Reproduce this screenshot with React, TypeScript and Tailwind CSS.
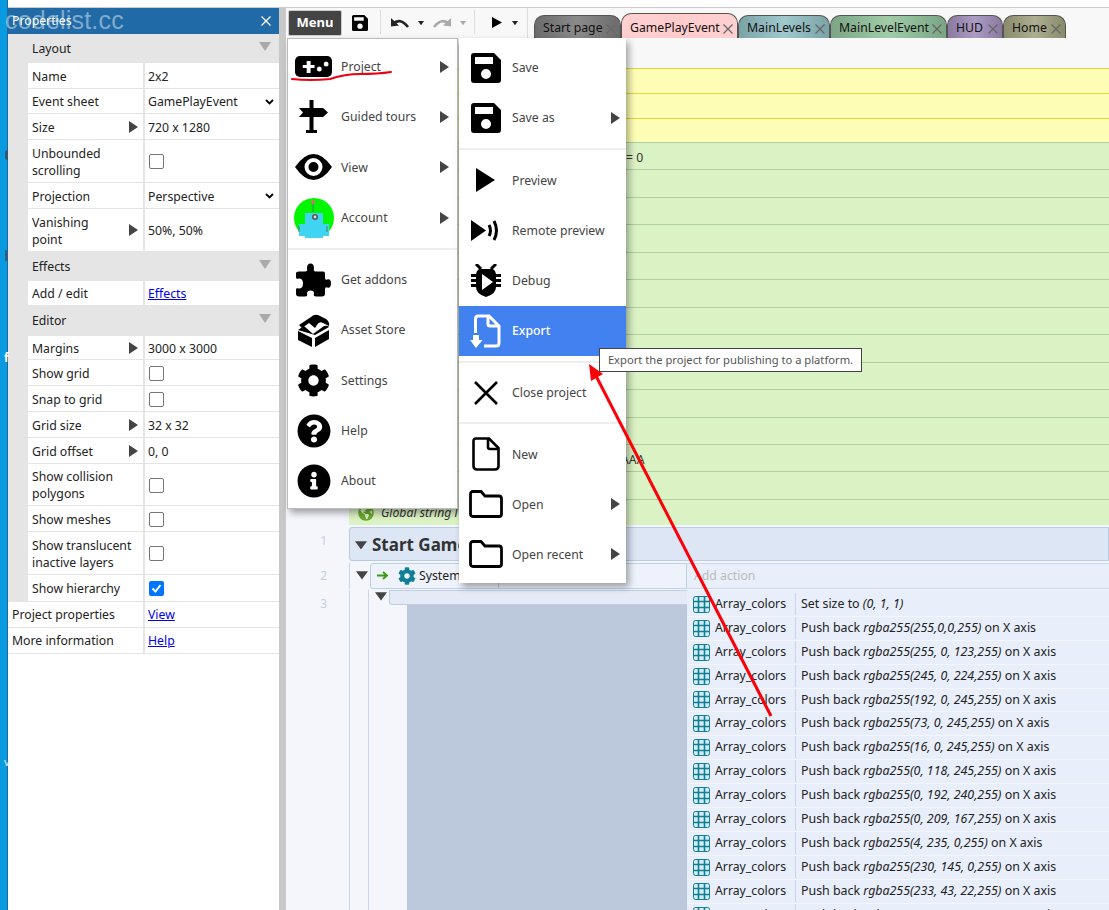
import type { ReactNode } from "react";
import { FaCog, FaGlobeAmericas, FaInfoCircle, FaQuestionCircle } from "react-icons/fa";

function Tri({ className = "" }: { className?: string }) {
  return (
    <svg width="9" height="12" viewBox="0 0 9 12" className={className}>
      <path d="M0 0L9 6L0 12Z" fill="#444" />
    </svg>
  );
}

function Down({ size = 13, color = "#444" }: { size?: number; color?: string }) {
  return (
    <svg width={size} height={size * 0.72} viewBox="0 0 13 9" className="shrink-0">
      <path d="M0 0H13L6.5 9Z" fill={color} />
    </svg>
  );
}

function SaveIcon({ size = 30 }: { size?: number }) {
  return (
    <svg width={size} height={size} viewBox="0 0 30 30">
      <path
        fillRule="evenodd"
        d="M3 0H23L30 7V27Q30 30 27 30H3Q0 30 0 27V3Q0 0 3 0ZM4 4V11H22V4ZM15 16A5 5 0 1 0 15.01 26A5 5 0 1 0 15 16Z"
        fill="#000"
      />
    </svg>
  );
}

function Gamepad() {
  return (
    <svg width="37" height="21" viewBox="0 0 38 21" preserveAspectRatio="none">
      <rect width="38" height="21" rx="5" fill="#000" />
      <path d="M8 9H12V5H16V9H20V12H16V17H12V12H8Z" fill="#fff" />
      <circle cx="25" cy="13" r="2.5" fill="#fff" />
      <circle cx="32" cy="8" r="2.5" fill="#fff" />
    </svg>
  );
}

function Signpost() {
  return (
    <svg width="29" height="33" viewBox="0 0 29 33">
      <path d="M10.500 0H14.500V8H24L29 12.500L24 17H14.500V30H18V33H7V30H10.500V17H0L4 12.500L0 8H10.500Z" fill="#000" />
    </svg>
  );
}

function Eye() {
  return (
    <svg width="37" height="26" viewBox="0 0 37 26">
      <path
        fillRule="evenodd"
        d="M0 13Q9 0 18.5 0Q28 0 37 13Q28 26 18.5 26Q9 26 0 13ZM18.5 4A9 9 0 1 0 18.51 22A9 9 0 1 0 18.5 4ZM18.5 8A5 5 0 1 1 18.49 18A5 5 0 1 1 18.5 8Z"
        fill="#000"
      />
    </svg>
  );
}

function Avatar() {
  return (
    <svg width="40" height="40" viewBox="0 0 40 40">
      <circle cx="20" cy="20" r="20" fill="#00f700" />
      <circle cx="19" cy="4" r="2" fill="#e06a80" />
      <path d="M19 6V14" stroke="#3a8a50" strokeWidth="1" />
      <rect x="11" y="15" width="18" height="25" fill="#3fd4f2" />
      <rect x="5" y="26" width="30" height="12" fill="#3fd4f2" />
      <circle cx="21" cy="19" r="3" fill="#555" />
      <circle cx="21" cy="19" r="1.4" fill="#ddd" />
      <path d="M5 28V34M33 28V34" stroke="#3a8a50" strokeWidth="1" />
    </svg>
  );
}

function Puzzle() {
  return (
    <svg width="35" height="34" viewBox="0 0 35 33">
      <path
        d="M3 8H9Q12 8 11 5Q11 0 14.500 0Q18 0 18 5Q17 8 20 8H27Q29 8 29 10V14Q29 17 31 16Q35 15 35 20Q35 25 31 24Q29 23 29 26V30Q29 33 26 33H20Q17 33 18 30Q18 27 14.500 27Q11 27 11 30Q12 33 9 33H3Q0 33 0 30V26Q0 24 3 25Q7 25 7 20Q7 15 3 15Q0 16 0 14V10Q0 8 3 8Z"
        fill="#000"
      />
    </svg>
  );
}

function Chest() {
  return (
    <svg width="32" height="33" viewBox="0 0 32 33">
      <path d="M1 11L13 3Q16 0 20 1L28 5Q32 8 31 12L25 9Q21 7 19 11L17 14L11 9L4 14Z" fill="#000" />
      <path d="M0 16L6 12L15 20L26 12Q30 11 31 13L17 21Z" fill="#000" />
      <path d="M0 17L14 24V33L0 26Z" fill="#000" />
      <path d="M17 24L31 16V25L17 33Z" fill="#000" />
    </svg>
  );
}

function PlayIcon() {
  return (
    <svg width="19" height="24" viewBox="0 0 19 24">
      <path d="M0 0L19 12L0 24Z" fill="#000" />
    </svg>
  );
}

function Remote() {
  return (
    <svg width="29" height="25" viewBox="0 0 29 25">
      <path d="M0 2L15 12.5L0 23Z" fill="#000" />
      <path d="M18 7Q21 12.5 18 18M23 3Q28 12.5 23 22" stroke="#000" strokeWidth="3" fill="none" />
    </svg>
  );
}

function Bug() {
  return (
    <svg width="30" height="33" viewBox="0 0 30 33">
      <path d="M5 0L10 5M25 0L20 5" stroke="#000" strokeWidth="3" />
      <path
        fillRule="evenodd"
        d="M8 5H22Q25 7 25 10H30V13H25V15H30V18H25V20H30V23H25Q25 30 15 33Q5 30 5 23H0V20H5V18H0V15H5V13H0V10H5Q5 7 8 5ZM11 10V26L22 18Z"
        fill="#000"
      />
    </svg>
  );
}

function ExportIcon() {
  return (
    <svg width="31" height="34" viewBox="0 0 31 34" fill="none">
      <path d="M5.500 19V5Q5.500 2 8 2H19L29 12V29Q29 32 26 32H14" stroke="#fff" strokeWidth="3" />
      <path d="M18 2V10Q18 12 20 12H29" stroke="#fff" strokeWidth="3" />
      <path d="M3 21H9V26H12.500L6 34L0 26H3Z" fill="#fff" />
    </svg>
  );
}

function Cross() {
  return (
    <svg width="24" height="24" viewBox="0 0 24 24">
      <path d="M1 1L23 23M23 1L1 23" stroke="#000" strokeWidth="2.6" />
    </svg>
  );
}

function NewFile() {
  return (
    <svg width="28" height="34" viewBox="0 0 28 34" fill="none">
      <path d="M4 1.500H17L26.500 11V29Q26.500 32.500 23 32.500H5Q1.500 32.500 1.500 29V4Q1.500 1.500 4 1.500Z" stroke="#000" strokeWidth="2.6" />
      <path d="M16 1.500V10Q16 12 18 12H26.500" stroke="#000" strokeWidth="2.6" />
    </svg>
  );
}

function Folder() {
  return (
    <svg width="34" height="28" viewBox="0 0 34 28" fill="none">
      <path
        d="M4 1.500H12L16 6H30Q32.500 6 32.500 9V24Q32.500 26.500 30 26.500H4Q1.500 26.500 1.500 24V4Q1.500 1.500 4 1.500Z"
        stroke="#000"
        strokeWidth="2.8"
      />
    </svg>
  );
}

function ArrayIcon() {
  return (
    <svg width="17" height="17" viewBox="0 0 17 17" className="shrink-0">
      <rect x="0.500" y="0.500" width="16" height="16" rx="2" fill="#d7ecf2" stroke="#0f7f96" />
      <path d="M5.500 1V16M11.500 1V16M1 5.500H16M1 11.500H16" stroke="#0f7f96" strokeWidth="1.6" />
    </svg>
  );
}

function UndoIcon({ color }: { color: string }) {
  return (
    <svg width="18" height="10" viewBox="0 0 18 10">
      <path d="M0 0L8 7.500L0 8.500Z" fill={color} />
      <path d="M2 6Q9 -1 17 9" stroke={color} strokeWidth="2.600" fill="none" />
    </svg>
  );
}

function Check({ on = false }: { on?: boolean }) {
  return on ? (
    <span className="ml-px flex h-[15px] w-[15px] items-center justify-center rounded-[2px] bg-[#0075ff]">
      <svg width="11" height="11" viewBox="0 0 11 11">
        <path d="M1.500 5.500L4.500 8.500L9.500 2" stroke="#fff" strokeWidth="2" fill="none" />
      </svg>
    </span>
  ) : (
    <span className="ml-px block h-[15px] w-[15px] rounded-[2px] border border-[#767676] bg-white" />
  );
}

type Prop = { label: ReactNode; h?: number; arrow?: boolean; value?: ReactNode };

const LAYOUT: Prop[] = [
  { label: "Name", h: 26, value: "2x2" },
  { label: "Event sheet", h: 25, value: <Select text="GamePlayEvent" /> },
  { label: "Size", arrow: true, value: "720 x 1280" },
  { label: <>Unbounded<br />scrolling</>, h: 43, value: <Check /> },
  { label: "Projection", value: <Select text="Perspective" /> },
  { label: <>Vanishing<br />point</>, h: 43, arrow: true, value: "50%, 50%" },
];

const EDITOR: Prop[] = [
  { label: "Margins", arrow: true, h: 24, value: "3000 x 3000" },
  { label: "Show grid", value: <Check /> },
  { label: "Snap to grid", value: <Check /> },
  { label: "Grid size", arrow: true, value: "32 x 32" },
  { label: "Grid offset", arrow: true, value: "0, 0" },
  { label: <>Show collision<br />polygons</>, h: 42, value: <Check /> },
  { label: "Show meshes", value: <Check /> },
  { label: <>Show translucent<br />inactive layers</>, h: 43, value: <Check /> },
  { label: "Show hierarchy", h: 27, value: <Check on /> },
];

function Select({ text }: { text: string }) {
  return (
    <span className="flex w-full items-center justify-between pr-[5px]">
      {text}
      <svg width="9" height="6" viewBox="0 0 9 6">
        <path d="M1 1L4.500 4.500L8 1" stroke="#000" strokeWidth="1.800" fill="none" />
      </svg>
    </span>
  );
}

function PropRow({ label, h = 26, arrow, value }: Prop) {
  return (
    <div className="flex border-b border-[#e5e5e5] bg-white leading-[17px]" style={{ height: h }}>
      <div className="flex w-[115px] items-center justify-between pl-[4px] pr-[5px]">
        <span className="pt-px">{label}</span>
        {arrow && <Tri />}
      </div>
      <div className="flex flex-1 items-center border-l-2 border-[#e5e5e5] pl-[3px] pt-px">{value}</div>
    </div>
  );
}

function Section({ title, h = 29 }: { title: string; h?: number }) {
  return (
    <div className="flex items-center justify-between bg-[#e5e5e5] pl-[4px] pr-[8px]" style={{ height: h }}>
      <span className="pt-px">{title}</span>
      <svg width="12" height="9" viewBox="0 0 12 9" className="mb-[5px]">
        <path d="M0 0H12L6 9Z" fill="#aaa" />
      </svg>
    </div>
  );
}

function PropertiesPanel() {
  return (
    <div className="flex w-[271px] shrink-0 flex-col bg-white text-[12.25px] text-[#222]">
      <div className="flex h-[26px] items-center justify-between bg-[#206aa8] pl-[4px] pr-[8px] text-white">
        <span className="pt-px">Properties</span>
        <svg width="10" height="10" viewBox="0 0 10 10">
          <path d="M0.500 0.500L9.500 9.500M9.500 0.500L0.500 9.500" stroke="#fff" strokeWidth="1.300" />
        </svg>
      </div>
      <div className="border-l-[20px] border-[#e5e5e5]">
        <Section title="Layout" />
        {LAYOUT.map((p, i) => (
          <PropRow key={i} {...p} />
        ))}
        <Section title="Effects" />
        <PropRow label="Add / edit" h={25} value={<a className="text-[#0000ee] underline">Effects</a>} />
        <Section title="Editor" h={30} />
        {EDITOR.map((p, i) => (
          <PropRow key={i} {...p} />
        ))}
      </div>
      <BottomRow label="Project properties" link="View" />
      <BottomRow label="More information" link="Help" />
    </div>
  );
}

function BottomRow({ label, link }: { label: string; link: string }) {
  return (
    <div className="flex h-[26px] border-b border-[#e5e5e5]">
      <div className="flex w-[135px] items-center pl-[4px] pt-px">{label}</div>
      <div className="flex flex-1 items-center border-l-2 border-[#e5e5e5] pl-[3px] pt-px">
        <a className="text-[#0000ee] underline">{link}</a>
      </div>
    </div>
  );
}

const TABS = [
  { name: "Start page", w: 87, cls: "h-[23px] pt-[3px] from-[#6c6c6c] via-[#8a8a8a] to-[#6c6c6c]" },
  { name: "GamePlayEvent", w: 117, cls: "h-[25px] pt-[5px] from-[#ffd0d0] via-[#ffcccc] to-[#ffd0d0]" },
  { name: "MainLevels", w: 92, cls: "h-[23px] pt-[3px] from-[#7ba3a6] via-[#a0c9ce] to-[#7ba3a6]" },
  { name: "MainLevelEvent", w: 117, cls: "h-[23px] pt-[3px] from-[#7ba585] via-[#a0cca8] to-[#7ba585]" },
  { name: "HUD", w: 56, cls: "h-[23px] pt-[3px] from-[#8a7aa0] via-[#ac9cc4] to-[#8a7aa0]" },
  { name: "Home", w: 63, cls: "h-[23px] pt-[3px] from-[#8a8a6c] via-[#aeae90] to-[#8a8a6c]" },
];

function ToolDivider() {
  return <span className="mt-[2px] h-[24px] w-px bg-[#ddd]" />;
}

function Toolbar() {
  return (
    <div className="flex h-[30px] shrink-0 items-start bg-[#f8f8f8] pl-[2px]">
      <div className="mt-[2px] flex h-[26px] w-[54px] items-center justify-center rounded-[2px] border border-[#ccc] bg-[#444] text-[13px] font-bold text-white">
        Menu
      </div>
      <div className="ml-[10px] mt-[7px]">
        <SaveIcon size={16} />
      </div>
      <div className="ml-[12px] flex">
        <ToolDivider />
      </div>
      <div className="ml-[10px] mt-[10px]">
        <UndoIcon color="#222" />
      </div>
      <div className="ml-[9px] mt-[13px]">
        <Down size={6} color="#222" />
      </div>
      <div className="ml-[9px] mt-[10px] -scale-x-100">
        <UndoIcon color="#aaa" />
      </div>
      <div className="ml-[9px] mt-[13px]">
        <Down size={6} color="#aaa" />
      </div>
      <div className="ml-[8px] flex">
        <ToolDivider />
      </div>
      <svg width="10" height="11" viewBox="0 0 10 11" className="ml-[17px] mt-[9px]">
        <path d="M0 0L10 5.500L0 11Z" fill="#000" />
      </svg>
      <div className="ml-[10px] mt-[13px]">
        <Down size={6} color="#222" />
      </div>
      <span className="ml-[9px] h-[30px] w-px bg-[#ddd]" />
      <div className="ml-[6px] mt-[5px] flex h-[25px] items-end">
        {TABS.map((t) => (
          <div
            key={t.name}
            className={`flex items-center justify-between rounded-t-[10px] border border-b-0 border-[#555] bg-linear-to-r pl-[8px] pr-[4px] text-[12.25px] text-[#111] ${t.cls}`}
            style={{ width: t.w }}
          >
            {t.name}
            <svg width="10" height="10" viewBox="0 0 10 10" className="shrink-0">
              <path d="M0.500 0.500L9.500 9.500M9.500 0.500L0.500 9.500" stroke="#666" strokeWidth="1.200" />
            </svg>
          </div>
        ))}
      </div>
    </div>
  );
}

const GREEN_TEXT: Record<number, ReactNode> = { 0: <span className="ml-[5px]">= 0</span>, 11: "AAA" };

function VariableRows() {
  return (
    <div className="shrink-0">
      <div className="h-[30px] bg-[#f8f8f8]" />
      <div className="ml-[63px]">
        {[25, 25, 24].map((h, i) => (
          <div key={i} className="border-t border-[#dcd83a] bg-[#fdfdb5]" style={{ height: h }} />
        ))}
        {Array.from({ length: 13 }).map((_, i) => (
          <div
            key={i}
            className="flex h-[27.46px] items-center border-t border-[#b0cfa0] bg-[#dbf2c4] pl-[272px] pt-[4px] text-[12.25px] text-[#333]"
          >
            {GREEN_TEXT[i]}
          </div>
        ))}
        <div className="flex h-[26px] items-center gap-[7px] border-t border-[#b0cfa0] bg-[#dbf2c4] pl-[9px] pt-px text-[12.25px] text-[#333]">
          <FaGlobeAmericas size={16} color="#6aa82c" />
          <i>Global string l</i>
        </div>
      </div>
    </div>
  );
}

function StartGame() {
  return (
    <div className="mt-[2px] flex h-[34px] shrink-0">
      <div className="w-[63px] pr-[22px] pt-[5px] text-right text-[12px] text-[#c4cfe2]">1</div>
      <div className="flex flex-1 items-center rounded-l-[3px] border border-[#b8cce4] bg-[#dce6f5] pl-[5px] pt-[2px] text-[17px] font-bold text-[#333]">
        <Down size={12} />
        <span className="ml-[5px]">Start Game</span>
      </div>
    </div>
  );
}

function SystemRow() {
  return (
    <div className="mt-[2px] flex h-[26px] shrink-0">
      <div className="w-[63px] pr-[22px] pt-[4px] text-right text-[12px] text-[#c4cfe2]">2</div>
      <div className="flex w-[21px] justify-center border-l border-[#ccd8ea] pl-[3px] pt-[8px]">
        <Down size={12} />
      </div>
      <div className="flex w-[317px] items-center rounded-l-[3px] border border-[#bccfe5] bg-[#eef2fb] pl-[6px] text-[12.25px] text-[#222]">
        <svg width="12" height="9" viewBox="0 0 12 9">
          <path d="M0 4.500H9M6 1L10 4.500L6 8" stroke="#3f9a10" strokeWidth="1.800" fill="none" />
        </svg>
        <span className="ml-[9px] flex items-center">
          <FaCog size={18} color="#0f7f96" />
        </span>
        <span className="ml-[3px] w-[79px] pt-px">System</span>
        <span className="h-full w-px bg-[#bccfe5]" />
      </div>
      <div className="flex flex-1 items-center border-y border-[#ccd8ea] bg-[#e8eefa] pl-[7px] pt-px text-[12.25px] text-[#bbb]">
        Add action
      </div>
    </div>
  );
}

const ACTIONS: [string, string][] = [
  ["Set size to ", "(0, 1, 1)"],
  ["Push back ", "rgba255(255,0,0,255)"],
  ["Push back ", "rgba255(255, 0, 123,255)"],
  ["Push back ", "rgba255(245, 0, 224,255)"],
  ["Push back ", "rgba255(192, 0, 245,255)"],
  ["Push back ", "rgba255(73, 0, 245,255)"],
  ["Push back ", "rgba255(16, 0, 245,255)"],
  ["Push back ", "rgba255(0, 118, 245,255)"],
  ["Push back ", "rgba255(0, 192, 240,255)"],
  ["Push back ", "rgba255(0, 209, 167,255)"],
  ["Push back ", "rgba255(4, 235, 0,255)"],
  ["Push back ", "rgba255(230, 145, 0,255)"],
  ["Push back ", "rgba255(233, 43, 22,255)"],
  ["Push back ", "rgba255(235, 126, 0,255)"],
];

function ActionsBlock() {
  return (
    <div className="mt-px flex min-h-0 flex-1">
      <div className="w-[63px] pr-[22px] pt-[5px] text-right text-[12px] text-[#c4cfe2]">3</div>
      <div className="flex w-[19px] border-l border-[#ccd8ea]" />
      <div className="flex w-[319px] flex-col border-l border-[#ccd8ea]">
        <div className="flex h-[15px] shrink-0">
          <div className="flex w-[20px] justify-center pl-[4px] pt-[2px]">
            <Down size={12} />
          </div>
          <div className="flex-1 rounded-bl-[3px] border-y border-l border-[#bccfe5] bg-[#e4ebf7]" />
        </div>
        <div className="ml-[38px] flex-1 bg-[#bcc9dc]" />
      </div>
      <div className="flex-1 bg-[#e8eefa] pt-[3px] text-[12.25px] text-[#222]">
        {ACTIONS.map(([verb, expr], i) => (
          <div key={i} className={`flex items-center border-b border-[#f4f6fc] pl-[6px] ${i === 4 ? "h-[23px]" : "h-[24px]"}`}>
            <ArrayIcon />
            <span className="ml-[5px] w-[80px]">Array_colors</span>
            <span className="h-[22px] w-px bg-[#c8d4e8]" />
            <span className="ml-[5px] whitespace-pre text-[12.4px]">
              {verb}
              <i>{expr}</i>
              {i > 0 && " on X axis"}
            </span>
          </div>
        ))}
      </div>
    </div>
  );
}

function Item({
  icon,
  label,
  arrow,
  active,
  left,
  h = 50.3,
}: {
  icon: ReactNode;
  label: string;
  arrow?: boolean;
  active?: boolean;
  left?: boolean;
  h?: number;
}) {
  return (
    <div className={`flex items-center ${active ? "bg-[#4281f0] font-medium text-white" : "text-[#444]"}`} style={{ height: h }}>
      <span className={`flex shrink-0 justify-center ${left ? "mr-[2px] w-[51px]" : "w-[53px]"}`}>{icon}</span>
      <span className="flex-1 pt-px">{label}</span>
      {arrow && <Tri className={left ? "mr-[8px]" : "mr-[6px]"} />}
    </div>
  );
}

function Sep() {
  return <div className="my-[5px] h-[2px] bg-[#eee]" />;
}

function MainMenu() {
  return (
    <div className="absolute left-[1px] top-[30px] w-[171px] border border-[#bbb] bg-white pb-[1.5px] pt-[2.5px] text-[12.25px] shadow-[3px_4px_7px_rgba(0,0,0,0.35)]">
      <Item left icon={<Gamepad />} label="Project" arrow />
      <Item left icon={<Signpost />} label="Guided tours" arrow />
      <Item left icon={<Eye />} label="View" arrow />
      <Item left icon={<Avatar />} label="Account" arrow />
      <Sep />
      <Item left icon={<Puzzle />} label="Get addons" />
      <Item left icon={<Chest />} label="Asset Store" />
      <Item left icon={<FaCog size={33} color="#000" />} label="Settings" />
      <Item left icon={<FaQuestionCircle size={34} color="#000" />} label="Help" />
      <Item left icon={<FaInfoCircle size={34} color="#000" />} label="About" />
    </div>
  );
}

function ProjectMenu() {
  return (
    <div className="absolute left-[173px] top-[30px] w-[167px] bg-white pb-[3.5px] pt-[4.5px] text-[12.25px] shadow-[3px_4px_7px_rgba(0,0,0,0.35)]">
      <Item icon={<SaveIcon />} label="Save" />
      <Item icon={<SaveIcon />} label="Save as" arrow />
      <Sep />
      <Item icon={<PlayIcon />} label="Preview" />
      <Item icon={<Remote />} label="Remote preview" />
      <Item icon={<Bug />} label="Debug" />
      <Item icon={<ExportIcon />} label="Export" active />
      <Sep />
      <Item icon={<Cross />} label="Close project" h={49} />
      <Sep />
      <Item icon={<NewFile />} label="New" h={50} />
      <Item icon={<Folder />} label="Open" arrow h={50} />
      <Item icon={<Folder />} label="Open recent" arrow h={50} />
    </div>
  );
}

function Annotations() {
  return (
    <svg width="1109" height="910" viewBox="0 0 1109 910" className="pointer-events-none absolute left-0 top-0">
      <path d="M771 716L594 372" stroke="#fb0007" strokeWidth="3" fill="none" />
      <path d="M589 364L603 374L591 381Z" fill="#fb0007" />
      <path
        d="M292 79Q310 81 330 79Q345 74 360 74Q378 74 391 72"
        stroke="#ee0010"
        strokeWidth="2"
        strokeLinecap="round"
        fill="none"
      />
    </svg>
  );
}

export default function App() {
  return (
    <div className="relative flex h-[910px] w-[1109px] overflow-hidden bg-white font-['Noto_Sans',sans-serif]">
      <div className="w-[8px] shrink-0 border-r border-[#1d6a94] bg-[#0a9ae2]" />
      <div className="flex min-w-0 flex-1 flex-col">
        <div className="h-[8px] shrink-0 border-b border-[#ccc] bg-white" />
        <div className="flex min-h-0 flex-1">
          <PropertiesPanel />
          <div className="w-[6px] shrink-0 bg-[#c8c8c8]" />
          <div className="relative flex min-w-0 flex-1 flex-col border-l border-[#ccc] bg-[#f4f6fc]">
            <Toolbar />
            <VariableRows />
            <StartGame />
            <SystemRow />
            <ActionsBlock />
            <MainMenu />
            <ProjectMenu />
            <div className="absolute left-[313px] top-[340px] flex h-[24px] w-[263px] items-center justify-center border border-[#444] bg-white text-[11.2px] text-[#555]">
              Export the project for publishing to a platform.
            </div>
          </div>
        </div>
      </div>
      <Annotations />
      <span className="absolute left-[5px] top-[150px] h-[10px] w-[3px] rounded-l-full bg-[#33566e]" />
      <span className="absolute left-[5px] top-[250px] h-[11px] w-[3px] bg-[#2a5f86]" />
      <span className="absolute left-[4px] top-[349px] text-[12px] font-bold text-white">f</span>
      <span className="absolute left-[4px] top-[754px] text-[11px] text-[#e8eef2]">v</span>
      <div className="pointer-events-none absolute left-[5px] top-[2px] font-['Liberation_Sans',sans-serif] text-[25px] tracking-[0.2px] text-white/45">
        codelist.cc
      </div>
    </div>
  );
}
